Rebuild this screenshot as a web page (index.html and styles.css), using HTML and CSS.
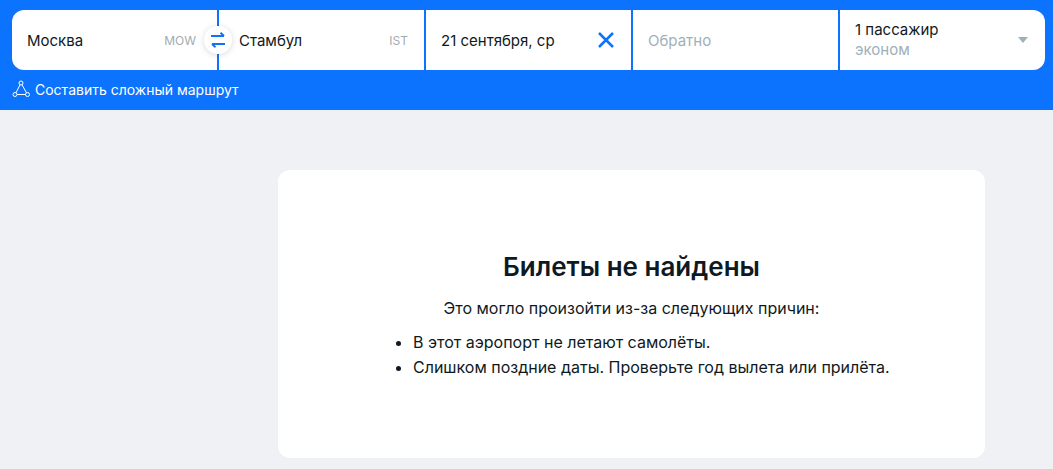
FILE: index.html
```html
<!DOCTYPE html>
<html lang="ru">
<head>
<meta charset="utf-8">
<title>Билеты не найдены</title>
<link rel="stylesheet" href="styles.css">
</head>
<body>
<header class="header">
  <form class="search">
    <div class="field field-first">
      <span class="value">Москва</span><span class="code">MOW</span>
      <button type="button" class="swap" aria-label="Поменять местами">
        <svg width="16" height="16" viewBox="0 0 16 16" fill="none" stroke="#0c73fe" stroke-width="2"><path d="M1 4h13M10.500 .8 14 4M15 12H2M5.500 15.200 2 12"/></svg>
      </button>
    </div>
    <div class="field field-to">
      <span class="value">Стамбул</span><span class="code">IST</span>
    </div>
    <div class="field">
      <span class="value">21 сентября, ср</span>
      <svg class="clear" width="18" height="18" viewBox="0 0 18 18" fill="none" stroke="#0c73fe" stroke-width="2.500"><path d="M2 2l14 14M16 2 2 16"/></svg>
    </div>
    <div class="field"><span class="value muted">Обратно</span></div>
    <div class="field field-last">
      <div class="pax"><span class="pax-count">1 пассажир</span><span class="pax-class">эконом</span></div>
      <span class="caret"></span>
    </div>
  </form>
  <a class="route" href="#">
    <svg width="18" height="18" viewBox="0 0 18 18" fill="none" stroke="#fff" stroke-width="1"><circle cx="9" cy="3" r="2"/><circle cx="3" cy="14.500" r="2"/><circle cx="15.500" cy="14.500" r="2"/><path d="M8 4.800 4 12.800M10 4.800l4.500 8M5 14.500h8.500"/></svg>
    <span>Составить сложный маршрут</span>
  </a>
</header>
<main class="main">
  <section class="card">
    <h1 class="title">Билеты не найдены</h1>
    <p class="lead">Это могло произойти из-за следующих причин:</p>
    <ul class="reasons">
      <li>В этот аэропорт не летают самолёты.</li>
      <li>Слишком поздние даты. Проверьте год вылета или прилёта.</li>
    </ul>
  </section>
</main>
</body>
</html>
```
FILE: styles.css
```css
* { box-sizing: border-box; }
html, body { height: 100%; }
body {
  margin: 0;
  overflow: hidden;
  background: #eff1f4;
  color: #0f1922;
  font-family: Inter, "Liberation Sans", sans-serif;
  font-size: 16px;
}
.header {
  height: 110px;
  background: #0c73fe;
  padding: 10px 8px 0 12px;
}
.search {
  display: grid;
  grid-template-columns: repeat(5, 205px);
  gap: 2px;
  height: 60px;
}
.field {
  position: relative;
  display: flex;
  align-items: center;
  justify-content: space-between;
  background: #fff;
  padding: 0 15px;
}
.field-first { border-radius: 12px 0 0 12px; padding-right: 21px; }
.field-to { padding: 0 16px 0 20px; }
.field-last { border-radius: 0 12px 12px 0; }
.value { font-size: 15px; white-space: nowrap; }
.muted { color: #a0b0b9; }
.code { font-size: 12px; color: #a3aab0; }
.swap {
  position: absolute;
  top: 16px;
  right: -15px;
  z-index: 1;
  display: flex;
  align-items: center;
  justify-content: center;
  width: 28px;
  height: 28px;
  padding: 0;
  border: 0;
  border-radius: 50%;
  background: #fff;
  box-shadow: 0 1px 6px rgba(0, 0, 0, 0.15);
}
.clear { margin-right: 1px; }
.pax { display: flex; flex-direction: column; }
.pax-count { font-size: 15px; line-height: 20px; }
.pax-class { font-size: 15px; line-height: 20px; color: #a0b0b9; }
.caret {
  width: 0;
  height: 0;
  margin-right: 2px;
  border: 5px solid transparent;
  border-top: 6px solid #a0b0b9;
  border-bottom: 0;
}
.route {
  display: flex;
  align-items: center;
  gap: 5px;
  height: 40px;
  padding-bottom: 2px;
  color: #fff;
  font-size: 14px;
  font-weight: 400;
  text-decoration: none;
}
.main { padding: 60px 68px 0 278px; }
.card {
  height: 288px;
  padding-top: 82px;
  background: #fff;
  border-radius: 12px;
}
.title {
  margin: 0;
  font-size: 26px;
  line-height: 30px;
  font-weight: 600;
  text-align: center;
}
.lead {
  margin: 14px 0 0;
  line-height: 24px;
  text-align: center;
}
.reasons {
  margin: 10px 0 0;
  padding-left: 135px;
  line-height: 25px;
}
```
